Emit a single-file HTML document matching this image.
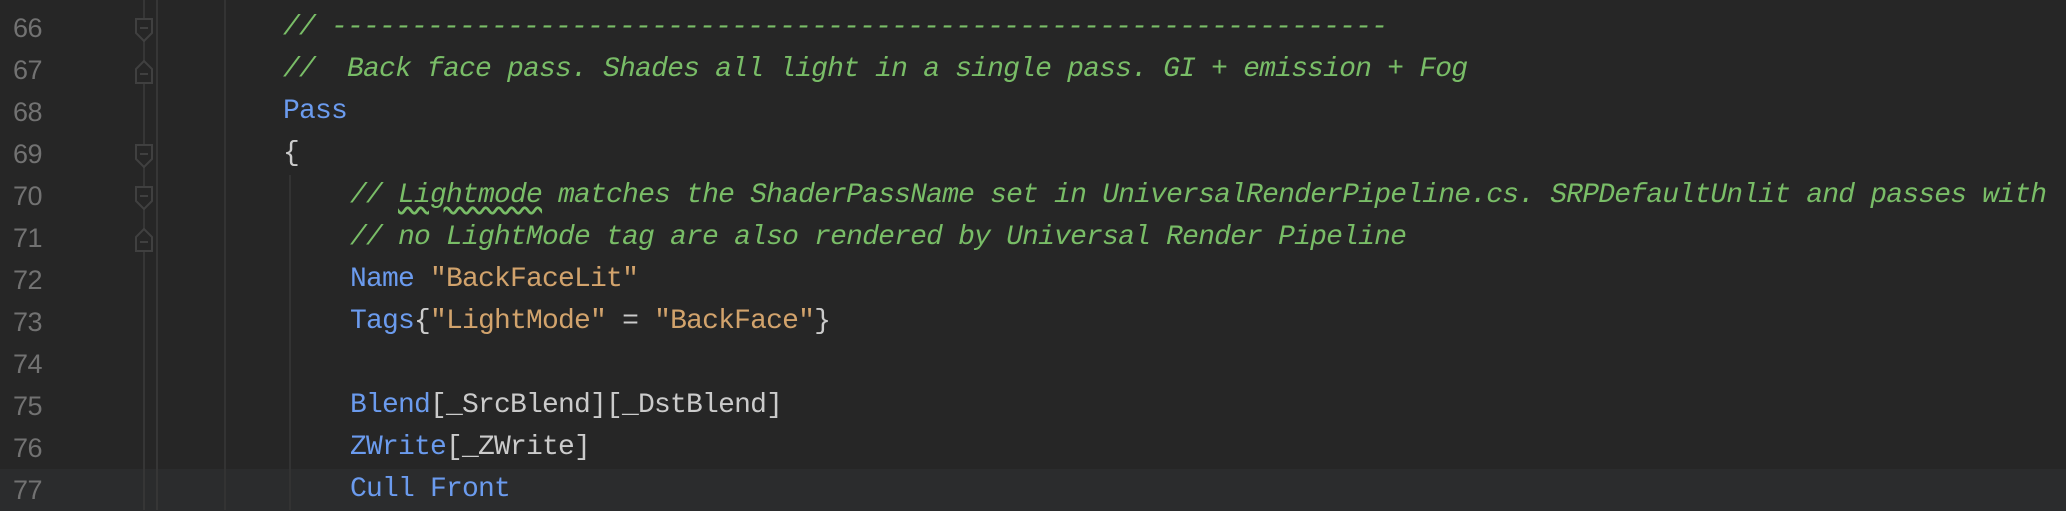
<!DOCTYPE html>
<html><head><style>
html,body{margin:0;padding:0;}
body{width:2066px;height:510px;background:#262626;position:relative;overflow:hidden;font-family:"Liberation Mono",monospace;font-size:28px;letter-spacing:-0.8px;}
.cur{position:absolute;left:0;top:469px;width:2066px;height:42px;background:#2b2c2d;}
.ln{position:absolute;left:13px;color:#727272;font-family:"Liberation Sans",sans-serif;font-size:27px;letter-spacing:-0.5px;line-height:42px;}
.code{position:absolute;left:0;white-space:pre;line-height:42px;color:#cbcbcb;}
.c{color:#79bd67;font-style:italic;}
.k{color:#6b9bee;}
.s{color:#d2a36c;}
.vl{position:absolute;top:0;height:510px;width:2px;}
</style></head><body>
<div class="cur"></div>
<div class="vl" style="left:143px;background:#363636"></div>
<div class="vl" style="left:156px;background:#363636"></div>
<div class="vl" style="left:224px;background:#333"></div>
<div class="vl" style="left:289px;top:175px;height:335px;background:#333"></div>
<svg style="position:absolute;left:0;top:0" width="170" height="510">
<g fill="#262626" stroke="#404040" stroke-width="2">
<path d="M136 19 H152 V33 L144 41 L136 33 Z"/>
<path d="M136 83 V69 L144 61 L152 69 V83 Z"/>
<path d="M136 145 H152 V159 L144 167 L136 159 Z"/>
<path d="M136 187 H152 V201 L144 209 L136 201 Z"/>
<path d="M136 251 V237 L144 229 L152 237 V251 Z"/>
</g>
<g stroke="#404040" stroke-width="2">
<path d="M140 28 H148 M140 74 H148 M140 154 H148 M140 196 H148 M140 242 H148"/>
</g>
</svg>
<div class="ln" style="top:7px">66</div>
<div class="ln" style="top:49px">67</div>
<div class="ln" style="top:91px">68</div>
<div class="ln" style="top:133px">69</div>
<div class="ln" style="top:175px">70</div>
<div class="ln" style="top:217px">71</div>
<div class="ln" style="top:259px">72</div>
<div class="ln" style="top:301px">73</div>
<div class="ln" style="top:343px">74</div>
<div class="ln" style="top:385px">75</div>
<div class="ln" style="top:427px">76</div>
<div class="ln" style="top:469px">77</div>
<div class="code" style="left:283px;top:7px"><span class="c">// ------------------------------------------------------------------</span></div>
<div class="code" style="left:283px;top:49px"><span class="c">//  Back face pass. Shades all light in a single pass. GI + emission + Fog</span></div>
<div class="code" style="left:283px;top:91px"><span class="k">Pass</span></div>
<div class="code" style="left:283px;top:133px">{</div>
<div class="code" style="left:350px;top:175px"><span class="c">// <span style="text-decoration:underline wavy #79bd67;text-underline-offset:4px">Lightmode</span> matches the ShaderPassName set in UniversalRenderPipeline.cs. SRPDefaultUnlit and passes with</span></div>
<div class="code" style="left:350px;top:217px"><span class="c">// no LightMode tag are also rendered by Universal Render Pipeline</span></div>
<div class="code" style="left:350px;top:259px"><span class="k">Name</span> <span class="s">"BackFaceLit"</span></div>
<div class="code" style="left:350px;top:301px"><span class="k">Tags</span>{<span class="s">"LightMode"</span> = <span class="s">"BackFace"</span>}</div>
<div class="code" style="left:350px;top:385px"><span class="k">Blend</span>[_SrcBlend][_DstBlend]</div>
<div class="code" style="left:350px;top:427px"><span class="k">ZWrite</span>[_ZWrite]</div>
<div class="code" style="left:350px;top:469px"><span class="k">Cull Front</span></div>
</body></html>
